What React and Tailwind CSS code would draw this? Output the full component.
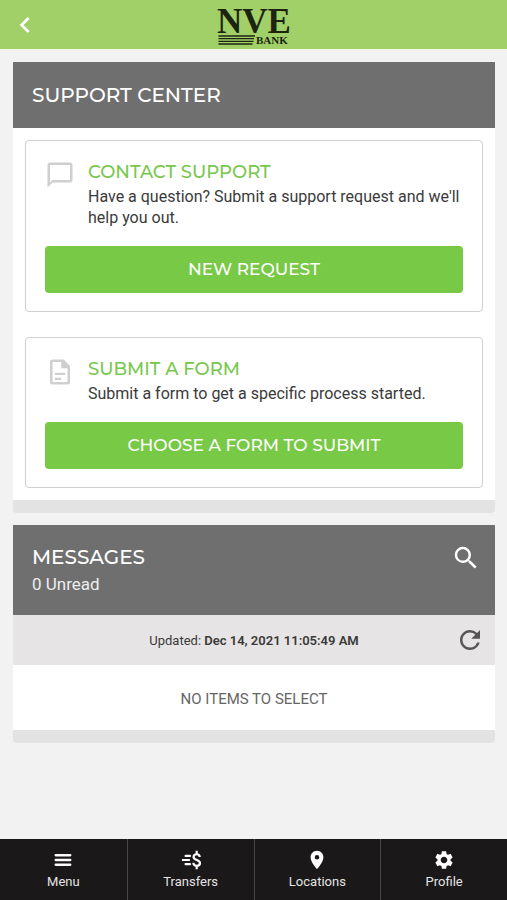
import React from 'react';
import {
  MdChatBubbleOutline, MdChevronLeft, MdLocationOn,
  MdRefresh, MdSearch, MdSettings
} from 'react-icons/md';

function Logo() {
  return (
    <svg viewBox="0 0 76 48" className="h-12 w-[76px]" role="img" aria-label="NVE Bank">
      <g fill="#1c2410" fontWeight="bold" className="font-['Liberation_Serif',serif]">
        <text x="38" y="32" fontSize="35" textAnchor="middle">NVE</text>
        <text x="40" y="43" fontSize="11">BANK</text>
      </g>
      <path d="M2.5 35H39M2.5 37.7H38M2.5 40.4H37.5M2.5 43H36.5" stroke="#1c2410" strokeWidth="1.3" />
    </svg>
  );
}

function FormIcon({ className }) {
  return (
    <svg viewBox="0 0 24 24" className={className} fill="none" stroke="currentColor" strokeWidth="2" aria-hidden="true">
      <path d="M14.5 3H6a1 1 0 0 0-1 1v16a1 1 0 0 0 1 1h12a1 1 0 0 0 1-1V7.5z" strokeLinejoin="round" />
      <path d="M13.5 3v5.500H19z" fill="currentColor" strokeWidth="1" />
      <path d="M8 13.5h8M8 17.500h5" strokeWidth="1.8" />
    </svg>
  );
}

function MenuIcon({ className }) {
  return (
    <svg viewBox="0 0 24 24" className={className} fill="none" stroke="currentColor" strokeWidth="2.5" strokeLinecap="round" aria-hidden="true">
      <path d="M4 6.8h16M4 12h16M4 17.2h16" />
    </svg>
  );
}

function TransferIcon({ className }) {
  return (
    <svg viewBox="0 0 24 24" className={className} fill="none" stroke="currentColor" strokeWidth="2.2" aria-hidden="true">
      <path d="M6 7.5h5M3 12h7M6 16.5h5" strokeLinecap="round" />
      <path d="M21.5 8.8c0-2-1.4-3.1-3.3-3.1s-3.4 1.1-3.4 3c0 4.1 7 2.4 7 6.5 0 2-1.6 3.1-3.6 3.1s-3.6-1.1-3.6-3.3M18.2 2v4M18.2 18v4" strokeWidth="2.4" />
    </svg>
  );
}

const actions = [
  {
    title: 'CONTACT SUPPORT',
    desc: "Have a question? Submit a support request and we'll help you out.",
    button: 'NEW REQUEST',
    icon: MdChatBubbleOutline
  },
  {
    title: 'SUBMIT A FORM',
    desc: 'Submit a form to get a specific process started.',
    button: 'CHOOSE A FORM TO SUBMIT',
    icon: FormIcon
  }
];

const tabs = [
  { label: 'Menu', icon: MenuIcon },
  { label: 'Transfers', icon: TransferIcon },
  { label: 'Locations', icon: MdLocationOn },
  { label: 'Profile', icon: MdSettings }
];

export default function App() {
  return (
    <div className="flex min-h-screen flex-col bg-[#f2f2f2] font-[Roboto,sans-serif] text-[#3a3a3a]">
      <header className="grid h-[50px] grid-cols-[1fr_auto_1fr] items-center border-b border-[#f0fae4] bg-[#a1d068]">
        <button aria-label="Back" className="ml-[9px] w-8 text-white">
          <MdChevronLeft className="size-8" />
        </button>
        <Logo />
      </header>

      <main className="flex flex-1 flex-col gap-3 pt-3 pr-3 pl-[13px]">
        {/* Support center */}
        <section className="overflow-hidden rounded-b border-b-13 border-[#e4e3e3] bg-white">
          <div className="bg-[#6f6f6f] px-[19px] py-[18px]">
            <h1 className="font-[Montserrat,Inter,sans-serif] text-[20px] leading-[30px] font-medium text-white">SUPPORT CENTER</h1>
          </div>
          <div className="flex flex-col gap-[25px] p-3">
            {actions.map(({ title, desc, button, icon: Icon }) => (
              <div key={title} className="rounded-sm border border-[#cfcfcf] px-[19px] pt-[19px] pb-[18px]">
                <div className="flex gap-[13px]">
                  <Icon className="size-[30px] shrink-0 text-[#cfcfcf]" />
                  <div>
                    <h2 className="font-[Montserrat,Inter,sans-serif] text-[18px] leading-6 font-medium text-[#78c74c]">{title}</h2>
                    <p className="mt-0.5 text-[16px] leading-[21px]">{desc}</p>
                  </div>
                </div>
                <button className="mt-[18px] h-[47px] w-full rounded-sm bg-[#78c945] font-[Montserrat,Inter,sans-serif] text-[17px] font-medium text-white">
                  {button}
                </button>
              </div>
            ))}
          </div>
        </section>

        {/* Messages */}
        <section className="overflow-hidden rounded-b border-b-13 border-[#e4e3e3] bg-white">
          <div className="flex items-start justify-between bg-[#6f6f6f] py-[18px] pr-3.5 pl-[19px] text-white">
            <div>
              <h2 className="font-[Montserrat,Inter,sans-serif] text-[20px] leading-7 font-medium">MESSAGES</h2>
              <p className="text-[17px] leading-[26px] text-[#ededed]">0 Unread</p>
            </div>
            <button aria-label="Search messages">
              <MdSearch className="size-[30px]" />
            </button>
          </div>
          <div className="grid h-[50px] grid-cols-[1fr_auto_1fr] items-center bg-[#e6e4e4] px-2.5">
            <p className="col-start-2 pt-0.5 text-[13px]">
              Updated: <span className="font-semibold">Dec 14, 2021 11:05:49 AM</span>
            </p>
            <button aria-label="Refresh" className="justify-self-end text-[#555]">
              <MdRefresh className="size-[30px]" />
            </button>
          </div>
          <p className="pt-6 pb-5 text-center text-[15px] leading-[21px] text-[#666]">NO ITEMS TO SELECT</p>
        </section>
      </main>

      <nav className="grid h-[61px] grid-cols-4 bg-[#1a1818] text-white">
        {tabs.map(({ label, icon: Icon }) => (
          <a key={label} href="#" className="flex flex-col items-center border-l border-[#484848] pt-2.5 first:border-l-0">
            <Icon className="size-[22px]" />
            <span className="text-[13px] leading-[22px] text-[#e4e4e4]">{label}</span>
          </a>
        ))}
      </nav>
    </div>
  );
}
